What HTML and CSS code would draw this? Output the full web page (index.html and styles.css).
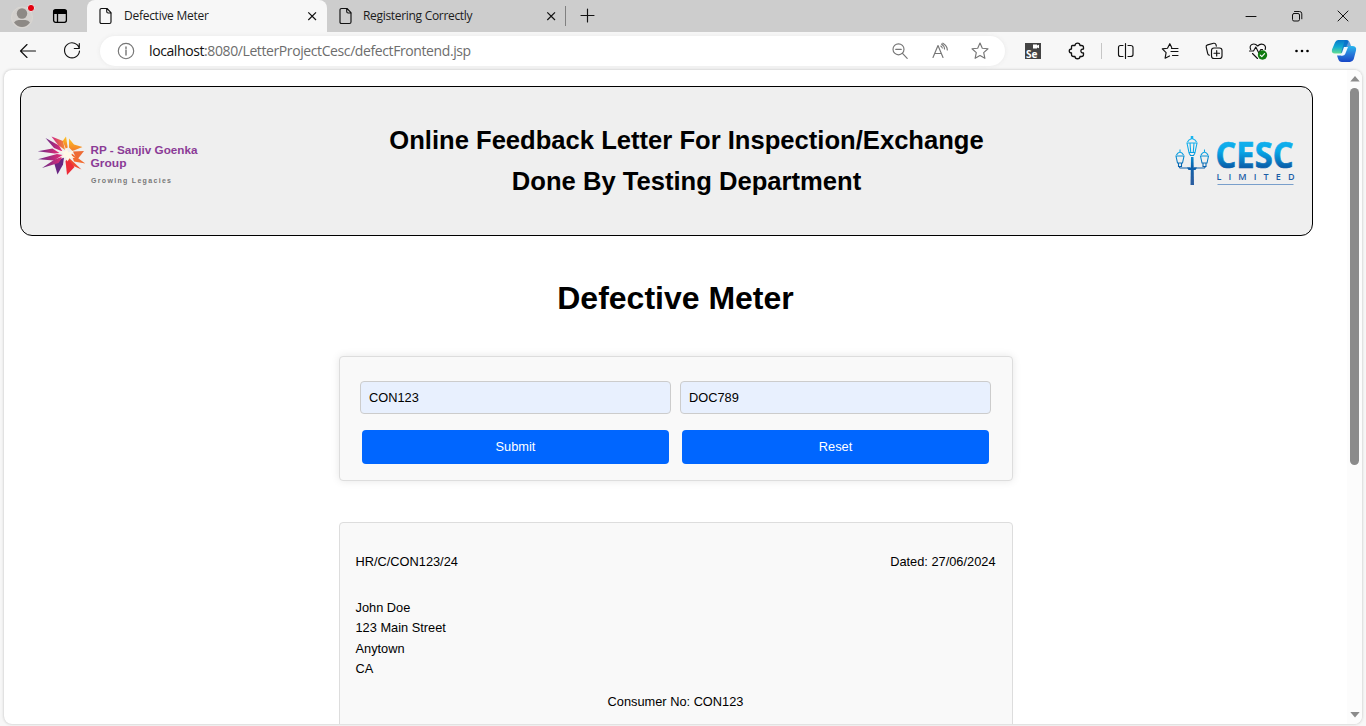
FILE: index.html
```html
<!DOCTYPE html>
<html lang="en">
<head>
<meta charset="utf-8">
<title>Defective Meter</title>
<link rel="stylesheet" href="styles.css">
</head>
<body>
<div class="browser">
  <div class="tabstrip">
    <svg class="profile" width="24" height="28" viewBox="0 0 24 28"><circle cx="11" cy="15.500" r="10.500" fill="#d3d0cd" stroke="#dad7d3"/><circle cx="11" cy="11.500" r="5.200" fill="#8d8985"/><path d="M3 20.500Q4.500 18 7.500 18h7q3 0 4.500 2.500Q15.500 25 11 25T3 20.500Z" fill="#8d8985"/><circle cx="20" cy="6" r="3.600" fill="#e3000f" stroke="#e6e6e6"/></svg>
    <svg class="workspaces" width="16" height="16" viewBox="0 0 16 16" fill="none" stroke="#000" stroke-width="1.3"><rect x="1.600" y="1.700" width="12.800" height="12.600" rx="2"/><path d="M1.600 4h12.800" stroke-width="4"/><path d="M5.500 5v9"/></svg>
    <div class="tab active">
      <svg width="14" height="18" viewBox="0 0 14 18" class="line"><path d="M2.500 1.500h5.500l4 4.200v9.300q0 1.500-1.500 1.500h-8q-1.500 0-1.500-1.500v-12q0-1.500 1.500-1.500ZM7.700 1.500v3q0 1.500 1.500 1.500h3"/></svg>
      <span>Defective Meter</span>
      <svg class="close" width="10" height="10" viewBox="0 0 10 10"><path d="M1.300 1.300l7.700 7.700M9 1.300l-7.700 7.700"/></svg>
    </div>
    <div class="tab">
      <svg width="14" height="18" viewBox="0 0 14 18" class="line"><path d="M2.500 1.500h5.500l4 4.200v9.300q0 1.500-1.500 1.500h-8q-1.500 0-1.500-1.500v-12q0-1.500 1.500-1.500ZM7.700 1.500v3q0 1.500 1.500 1.500h3"/></svg>
      <span class="second">Registering Correctly</span>
      <svg class="close" width="10" height="10" viewBox="0 0 10 10"><path d="M1.300 1.300l7.700 7.700M9 1.300l-7.700 7.700"/></svg>
    </div>
    <i class="tabsep"></i>
    <svg class="plus line" width="16" height="16" viewBox="0 0 16 16"><path d="M8.500 1v13M2 7.500h13"/></svg>
    <div class="window">
      <svg width="12" height="12" viewBox="0 0 12 12" class="line thin"><path d="M1 6.500h10"/></svg>
      <svg width="12" height="12" viewBox="0 0 12 12" class="line thin"><rect x="1.500" y="3.500" width="7" height="7.500" rx="1.500"/><path d="M3.500 1.500h5q2.300 0 2.300 2.300v5"/></svg>
      <svg width="12" height="12" viewBox="0 0 12 12" class="line thin"><path d="M1 1l10 10M11 1l-10 10"/></svg>
    </div>
  </div>

  <div class="toolbar">
    <span class="btn"><svg class="line" viewBox="0 0 24 24"><path d="M19.500 12H4.500M11 5.500l-6.500 6.500 6.500 6.500"/></svg></span>
    <span class="btn"><svg class="line" viewBox="0 0 24 24"><path d="M19.300 9.500A7.500 7.500 0 1 0 19.500 12M19.300 4.500v5h-5"/></svg></span>
    <div class="address">
      <span class="ic"><svg class="line grey" viewBox="0 0 24 24"><circle cx="12" cy="12" r="7.700"/><path d="M12 11v5M12 8v1.400" stroke-width="1.400"/></svg></span>
      <span class="url"><b>localhost</b>:8080/LetterProjectCesc/defectFrontend.jsp</span>
      <span class="ic"><svg class="line grey" viewBox="0 0 24 24"><circle cx="10.500" cy="10.300" r="5.500"/><path d="M14.500 14.300l4.700 5M7.700 10.300h5.600"/></svg></span>
      <span class="ic"><svg class="line grey" viewBox="0 0 24 24"><path d="M5 18.500L10 6.500l5 12M6.700 14.500h6.600M13.500 5q3 2 3 5M14.800 4.200q4.500 2.500 4.500 6.800M12.800 7q1.300 1 1.500 2"/></svg></span>
      <span class="ic"><svg class="line grey" viewBox="0 0 24 24"><path d="M12 4l2.300 5.200 5.700.6-4.300 3.800 1.200 5.700L12 16.500l-4.900 2.800 1.200-5.700L4 9.800l5.700-.6Z"/></svg></span>
    </div>
    <span class="btn ext"><svg viewBox="0 0 24 24"><rect x="4" y="4" width="16" height="16" fill="#444"/><path d="M12 5.500h4v1l2-.8v3.600l-2-.8v1h-4Z" fill="#fff"/><text x="5" y="18.500" class="se">Se</text></svg></span>
    <span class="btn"><svg class="line puzzle" viewBox="0 0 24 24"><path d="M7.500 6.500h2.500c0-3.300 5-3.300 5 0h1.500q2 0 2 2V10c-3.500-.3-3.500 4.300 0 4v1.500q0 2-2 2h-1.500c0 3-5 3-5 0H8.500q-2 0-2-2V14c-3-.3-3-4 0-4V7.500q0-1 1-1Z"/></svg></span>
    <i class="sep"></i>
    <span class="btn flush"><svg class="line" viewBox="0 0 24 24"><path d="M9 6.500H6.500q-2 0-2 2v7q0 2 2 2H9M14 6.500h2.500q2.500 0 2.500 2v7q0 2-2.500 2H14M11.500 4.500v15"/></svg></span>
    <span class="btn"><svg class="line" viewBox="0 0 24 24"><path d="M13.700 8.500L11.800 4.700 9.500 9.200l-5.200.7 3.800 3.700-1 5.600 4.400-2.300M13.500 9.500h6.500M13 12.500h7M14.500 16.500h5.500"/></svg></span>
    <span class="btn"><svg class="line" viewBox="0 0 24 24"><path d="M7.500 16.200q-1.400-.2-1.800-1.700L4.200 8.200q-.4-1.800 1.400-2.300l6-1.600q1.900-.4 2.400 1.400l.3 1.500"/><rect x="9.500" y="9" width="10.500" height="10.500" rx="2.500"/><path d="M14.700 11.500v5.500M12 14.200h5.500"/></svg></span>
    <span class="btn"><svg class="line" viewBox="0 0 24 24"><path d="M4.700 10.500C2.300 5.500 8 3.200 11.700 7c3.700-4 9-1 7.500 3.500M3.500 12h4l2.300-4 3 6 2-3.500h1.700M6.500 14.500l5 5"/><circle cx="16.500" cy="16" r="4.700" fill="#107c10" stroke="none"/><path d="M14.300 16.200l1.500 1.500 2.800-3" stroke="#fff"/></svg></span>
    <span class="btn"><svg viewBox="0 0 24 24"><circle cx="6.500" cy="12" r="1.300"/><circle cx="12" cy="12" r="1.300"/><circle cx="17.500" cy="12" r="1.300"/></svg></span>
    <svg class="copilot" viewBox="0 0 26 26"><defs><linearGradient id="cp1" x1="0" y1="0" x2="0" y2="1"><stop offset="0" stop-color="#0877c9"/><stop offset=".5" stop-color="#11a9d2"/><stop offset="1" stop-color="#64dd91"/></linearGradient><linearGradient id="cp2" x1="0" y1="0" x2="0" y2="1"><stop offset="0" stop-color="#28b7ee"/><stop offset=".5" stop-color="#2879d9"/><stop offset="1" stop-color="#1746c6"/></linearGradient></defs><path d="M7 2h8q3 0 2.200 2.500L13.500 13q-1.200 2-3.500 2.500H4q-4 0-3-4L4 4.500Q5 2 7 2Z" fill="url(#cp1)"/><path d="M18 8h3q5 0 4 4.500l-2.300 8.800Q21.500 24 19 24h-8q-3 0-4-3.500L6 17.500h5q2 0 3-3l2-6Z" fill="url(#cp2)"/><path d="M14 2h2q2 0 3 3l1 3h-2q-2 0-3 3l-2 4-3-.5Z" fill="#0b66c9" opacity=".65"/><path d="M13 9h4l-2.800 7q-.8 1.500-2.700 1.500h-1.500Z" fill="#f0f8ff"/></svg>
  </div>

  <div class="viewport">
    <main class="page">
      <header class="banner">
        <svg class="logo-rp" width="162" height="54" viewBox="0 0 162 54">
          <defs><linearGradient id="pm" x2="1"><stop stop-color="#672b88"/><stop offset="1" stop-color="#e72a75"/></linearGradient><linearGradient id="mo"><stop stop-color="#ce228a"/><stop offset="1" stop-color="#f78b2d"/></linearGradient><linearGradient id="yo" x2="0" y2="1"><stop stop-color="#fdc425"/><stop offset="1" stop-color="#f37a2a"/></linearGradient></defs>
          <g>
            <path d="M.7 17.300L15.500 14.500l7 4.500-5 .5Z" fill="url(#pm)"/>
            <path d="M1 25.300l19-5.300 5.500 1-8.500 5.500Z" fill="url(#pm)"/>
            <path d="M8.500 4L22 11.500l3.500 6-8.500-3.500Z" fill="url(#pm)"/>
            <path d="M14.500 2.500l11.500 4.500 2 9-7-5Z" fill="url(#mo)"/>
            <path d="M29 2.500l1.700 11-2 1-3-7.500Z" fill="url(#yo)"/>
            <path d="M32 4.500l5 6 8.500 2.500-10 4-3.500-3.500Z" fill="url(#yo)"/>
            <path d="M47 17l-11 .5 4 8.500Z" fill="#ed6b35"/>
            <path d="M48.300 29.500L34 19l3 8.500Z" fill="#f26b30"/>
            <path d="M44.500 35.500L31 23l-1 5 6.500 4Z" fill="#ef4b2f"/>
            <path d="M30 41L28.500 27l2.500-2 6.500 8Z" fill="#ed2c38"/>
            <path d="M20.500 40.500l-3.500-12 10-5-1 7Z" fill="#692582"/>
            <path d="M5 34l12.500-8.500 8.500-3-4.500 6.500Z" fill="url(#pm)"/>
            <path d="M29.500 14l2 4.500 5-2-2.500 4.500 4 3-5-.5-2.500 4-1.500-4.500-5 1 3-4-4-3 5 .5Z" fill="#fff8e6"/>
          </g>
          <text x="53.500" y="20" class="rp" textLength="107" lengthAdjust="spacingAndGlyphs">RP - Sanjiv Goenka</text><text x="53.500" y="33" class="rp" textLength="36" lengthAdjust="spacingAndGlyphs">Group</text>
          <text x="54" y="48.500" class="rps" textLength="80">Growing Legacies</text>
        </svg>
        <h1>Online Feedback Letter For Inspection/Exchange<br>Done By Testing Department</h1>
        <svg class="logo-cesc" width="122" height="54" viewBox="0 0 122 54">
          <defs><linearGradient id="cg" gradientUnits="userSpaceOnUse" x1="0" y1="2" x2="0" y2="46"><stop stop-color="#19b5ef"/><stop offset=".35" stop-color="#08a7e8"/><stop offset=".7" stop-color="#0960ab"/><stop offset="1" stop-color="#285da0"/></linearGradient></defs>
          <g fill="none" stroke="url(#cg)" stroke-width="1.100">
            <path d="M13 9h10l-2 9.500h-6ZM13.500 8q1-2.500 4.500-3.500 3.500 1 4.500 3.500M16 9l.7 9M20 9l-.7 9M15 19l1.500 2.500h3L21 19"/><path d="M18 2v3" stroke-width="2.500"/>
            <path d="M2 22H10l-1.500 7H3.500ZM2.500 21q1-2.300 3.500-3 2.500.7 3.500 3M6 15.500v2M4.500 29.500v3h3v-3M5 32.500l1 1.500h10M26.500 22h8l-1.500 7h-5ZM27 21q1-2.300 3.500-3 2.500.7 3.500 3M30.500 15.500v2M29 29.500v3h3v-3M31.500 32.500l-1 1.500H20"/>
          </g>
          <path d="M17 23h2.500l.5 28h-3.500Z" fill="url(#cg)"/><path d="M13 33.500h10l-1.500 2.500h-7Z" fill="url(#cg)"/>
          <text x="41.500" y="34" class="cesc" fill="url(#cg)" stroke="url(#cg)" textLength="78" lengthAdjust="spacingAndGlyphs">CESC</text>
          <text x="42.500" y="45.500" class="lim" fill="#1b5ea7" textLength="78">LIMITED</text>
          <path d="M43.500 50.500h76" stroke="#799fcb"/>
        </svg>
      </header>
      <h2>Defective Meter</h2>
      <form class="card form">
        <input type="text" value="CON123" aria-label="Consumer number"><input type="text" value="DOC789" aria-label="Document number">
        <button type="button">Submit</button><button type="button">Reset</button>
      </form>
      <section class="card letter">
        <div class="meta"><span>HR/C/CON123/24</span><span>Dated: 27/06/2024</span></div>
        <address>John Doe<br>123 Main Street<br>Anytown<br>CA</address>
        <p>Consumer No: CON123</p>
      </section>
    </main>
    <div class="scrollbar">
      <svg width="10" height="6" viewBox="0 0 10 6"><path d="M5 0l4.700 5.500H.3Z"/></svg>
      <i class="thumb"></i>
      <svg width="10" height="6" viewBox="0 0 10 6"><path d="M5 5.500L.3 0h9.400Z"/></svg>
    </div>
  </div>
</div>
</body>
</html>
```
FILE: styles.css
```css
* { box-sizing: border-box; }
body { margin: 0; overflow: hidden; font-family: "Liberation Sans", Arial, sans-serif; color: #000; }
svg { display: block; flex: none; }
.browser { width: 1366px; height: 726px; display: flex; flex-direction: column; background: #f7f7f7; overflow: hidden; }
.line { fill: none; stroke: #111; stroke-width: 1.15; stroke-linecap: round; stroke-linejoin: round; }
.grey { stroke: #767676; }
.thin { stroke-width: 1; }
.puzzle { stroke-width: 1.3; }

.tabstrip { height: 32px; flex: none; display: flex; align-items: center; background: #cdcdcd; }
.profile { margin-left: 11px; }
.workspaces { margin: 0 19px 0 17px; }
.tab { width: 239px; height: 32px; padding: 0 10px 0 12px; display: flex; align-items: center; font: 12px "Open Sans", "Noto Sans", sans-serif; color: #1b1b1b; }
.tab.active { width: 240px; background: #f7f7f7; border-radius: 8px 8px 0 0; }
.tab span { flex: 1; margin-left: 11px; padding-bottom: 1px; letter-spacing: -0.27px; white-space: nowrap; }
.tab .second { margin-left: 10px; letter-spacing: -0.31px; }
.close { fill: none; stroke: #111; stroke-width: 1.2; }
.tabsep { width: 1px; height: 20px; background: #808080; margin-left: -1px; }
.plus { margin-left: 13px; }
.window { margin-left: auto; display: flex; gap: 34px; padding-right: 17px; }

.toolbar { height: 38px; flex: none; display: flex; align-items: center; padding-left: 8px; }
.btn, .ic { width: 40px; height: 32px; flex: none; display: flex; align-items: center; justify-content: center; }
.btn { margin-right: 4px; }
.btn svg, .ic svg { width: 24px; height: 24px; }
.address { width: 905px; height: 30px; margin-left: 4px; padding: 0 5px 0 6px; display: flex; align-items: center; background: #fff; border-radius: 15px; box-shadow: 0 0 4px #e8e8e8; }
.url { flex: 1; margin-left: 3px; padding-bottom: 1px; font: 14px "Open Sans", "Noto Sans", sans-serif; letter-spacing: -0.4px; color: #6d6d6d; white-space: nowrap; }
.url b { font-weight: 400; color: #111; }
.ext { margin-left: 8px; }
.se { font: bold 10px "Open Sans", sans-serif; fill: #fff; }
.sep { width: 1px; height: 16px; background: #c6c6c6; }
.flush { margin-left: 4px; }
.copilot { width: 26px; height: 26px; margin-left: 5px; }

.viewport { margin: 0 4px 2px; height: 654px; flex: none; display: flex; overflow: hidden; background: #fff; border-radius: 8px; box-shadow: 0 0 3px #bbb; }
.page { width: 1343px; padding: 16px 18px 0 16px; font-size: 12.8px; line-height: 20.48px; }
.banner { width: 1293px; height: 150px; padding: 0 16px; display: flex; align-items: center; justify-content: space-between; background: #efefef; border: 1px solid #000; border-radius: 12px; }
.banner h1 { margin: 0; width: 640px; text-align: center; font-size: 25.6px; line-height: 40.96px; }
.logo-rp, .logo-cesc { overflow: visible; }
.rp { font: bold 11.5px "Liberation Sans", Arial, sans-serif; fill: #8b3b96; }
.rps { font: bold 7px "Liberation Sans", Arial, sans-serif; fill: #777; }
.cesc { font: bold 36px "Open Sans", sans-serif; stroke-width: .7px; }
.lim { font: 600 9px "Open Sans", sans-serif; }
h2 { width: 1311px; margin: 36px 0 32px; text-align: center; font-size: 32px; line-height: 52px; }
.card { width: 674px; background: #f9f9f9; border: 1px solid #ddd; border-radius: 4px; }
.page .card { margin-left: 319px; }
.form { height: 125px; padding: 24px 21px 16px 20px; display: grid; grid-template-columns: 311px 311px; grid-template-rows: 33px 34px; gap: 16px 9px; box-shadow: 0 0 8px rgba(0,0,0,.1); }
input { width: 311px; height: 33px; padding: 0 8px 1px; border: 1px solid #ccc; border-radius: 4px; background: #e8f0fe; font: 12.8px "Liberation Sans", Arial, sans-serif; color: #000; }
button { height: 34px; margin: 0 2px; padding: 0 0 1px; border: 0; border-radius: 4px; background: #06f; color: #fff; font: 12.8px "Liberation Sans", Arial, sans-serif; }
.page .letter { margin-top: 41px; height: 240px; padding: 28.6px 16.5px 0 15.5px; }
.meta { display: flex; justify-content: space-between; }
address { margin-top: 25.6px; font-style: normal; }
.letter p { margin: 12.4px 0 0; text-align: center; }
.scrollbar { width: 15px; padding: 6px 0; display: flex; flex-direction: column; align-items: center; background: #fcfcfc; fill: #8b8b8b; }
.thumb { width: 9px; height: 377px; margin: 6px 0 auto; border-radius: 5px; background: #8b8b8b; }
```
